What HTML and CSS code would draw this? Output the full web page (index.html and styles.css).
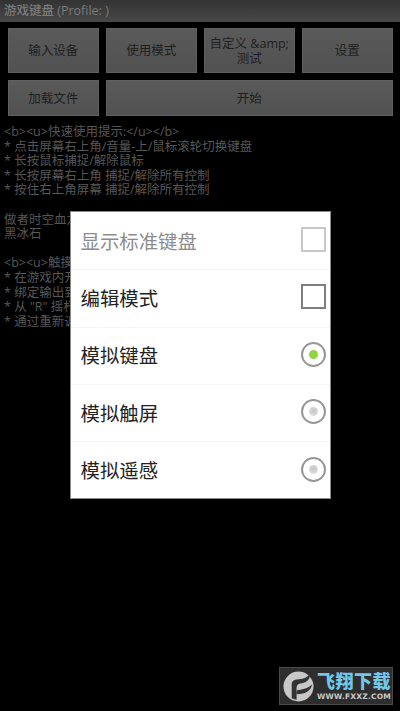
FILE: index.html
```html
<!DOCTYPE html>
<html>
  <head>
    <title>游戏键盘</title>
    <meta name="viewport" content="width=device-width, initial-scale=1">
    <link rel="stylesheet" href="styles.css">
  </head>
  <body>
    <div class="title-bar">游戏键盘 (Profile: )</div>
    <div class="buttons">
      <div class="btn btn-tall">输入设备</div>
      <div class="btn btn-tall">使用模式</div>
      <div class="btn btn-tall">自定义 &amp;amp;<br>测试</div>
      <div class="btn btn-tall">设置</div>
      <div class="btn btn-short">加载文件</div>
      <div class="btn btn-short btn-wide">开始</div>
    </div>
    <div class="help">
      <p>&lt;b&gt;&lt;u&gt;快速使用提示:&lt;/u&gt;&lt;/b&gt;</p>
      <p>* 点击屏幕右上角/音量-上/鼠标滚轮切换键盘</p>
      <p>* 长按鼠标捕捉/解除鼠标</p>
      <p>* 长按屏幕右上角 捕捉/解除所有控制</p>
      <p>* 按住右上角屏幕 捕捉/解除所有控制</p>
      <p>&nbsp;</p>
      <p>做者时空血龙</p>
      <p>黑冰石</p>
      <p>&nbsp;</p>
      <p>&lt;b&gt;&lt;u&gt;触摸屏</p>
      <p>* 在游戏内开启</p>
      <p>* 绑定输出到</p>
      <p>* 从 "R" 摇杆</p>
      <p>* 通过重新调整</p>
    </div>

    <div class="dialog">
      <div class="row row-disabled">
        <span>显示标准键盘</span>
        <span class="check check-disabled"></span>
      </div>
      <div class="row">
        <span>编辑模式</span>
        <span class="check"></span>
      </div>
      <div class="row">
        <span>模拟键盘</span>
        <span class="radio"><span class="dot dot-on"></span></span>
      </div>
      <div class="row">
        <span>模拟触屏</span>
        <span class="radio"><span class="dot"></span></span>
      </div>
      <div class="row">
        <span>模拟遥感</span>
        <span class="radio"><span class="dot"></span></span>
      </div>
    </div>

    <div class="watermark">
      <svg class="wm-logo" width="31" height="31" viewBox="0 0 32 32">
        <circle cx="16" cy="16" r="15.500" fill="#c8c8c8"/>
        <path d="M9 28 V14 C9 8 15 9 20 8 C24 7 26 5 28 3 C28 10 23 12 18 13 C15 13.500 14 15 14 18 V30 Z" fill="#333"/>
        <path d="M14 20 C19 19 25 19 30 14 C29 20 24 24 14 24 Z" fill="#333"/>
      </svg>
      <div class="wm-text">
        <div class="wm-name">飞翔下载</div>
        <div class="wm-url">WWW.FXXZ.COM</div>
      </div>
    </div>
  </body>
</html>
```

FILE: styles.css
```css
html, body {
  margin: 0;
  padding: 0;
}
body {
  position: relative;
  width: 400px;
  height: 711px;
  overflow: hidden;
  background-color: #000;
  font-family: "Open Sans", "Noto Sans CJK SC", sans-serif;
}
.title-bar {
  height: 22px;
  line-height: 22px;
  padding-left: 4px;
  font-size: 12.5px;
  font-weight: 500;
  color: #7b7b7b;
  background: linear-gradient(#333, #484848);
}
.buttons {
  display: grid;
  grid-template-columns: repeat(4, 90.5px);
  column-gap: 7.5px;
  row-gap: 7px;
  padding: 6px 8px 0 8px;
}
.btn {
  display: flex;
  align-items: center;
  justify-content: center;
  text-align: center;
  font-size: 12.5px;
  line-height: 15px;
  color: #1f1f1f;
  background: linear-gradient(#5a5a5a, #515151);
  box-sizing: border-box;
  border: 1px solid #5f5f5f;
}
.btn-tall {
  height: 45px;
}
.btn-short {
  height: 36px;
}
.btn-wide {
  grid-column: 2 / 5;
}
.help {
  padding: 9px 0 0 4px;
  font-size: 12.5px;
  line-height: 14.6px;
  color: #575757;
}
.help p {
  margin: 0;
}
.dialog {
  position: absolute;
  left: 70px;
  top: 211px;
  width: 261px;
  height: 288px;
  box-sizing: border-box;
  border: 1px solid #8a8a8a;
  padding-top: 1px;
  background-color: #fff;
}
.row {
  display: flex;
  align-items: center;
  justify-content: space-between;
  height: 57.3px;
  box-sizing: border-box;
  padding: 0 4px 2px 9.5px;
  border-bottom: 1px solid #f5f5f5;
  font-size: 19.4px;
  color: #222;
}
.row:last-child {
  border-bottom: none;
}
.row-disabled {
  color: #8c8c8c;
}
.check {
  width: 25px;
  height: 25px;
  margin-top: -1px;
  box-sizing: border-box;
  border: 2px solid #7e7e7e;
}
.check-disabled {
  border-color: #c8c8c8;
}
.radio {
  display: flex;
  align-items: center;
  justify-content: center;
  width: 25px;
  height: 25px;
  margin-top: -1px;
  box-sizing: border-box;
  border: 2px solid #979797;
  border-radius: 50%;
}
.dot {
  width: 9px;
  height: 9px;
  border-radius: 50%;
  background: radial-gradient(circle at 50% 40%, #c4c4c4, #e8e8e8);
}
.dot-on {
  background: #8ed63c;
}
.watermark {
  position: absolute;
  left: 279px;
  top: 667px;
  width: 114px;
  height: 38px;
  display: flex;
  align-items: center;
  gap: 3px;
  padding-left: 3px;
  box-sizing: border-box;
  border: 1px solid #4a4a4a;
  background-color: #2e2e2e;
}
.wm-text {
  display: flex;
  flex-direction: column;
  align-items: center;
}
.wm-name {
  font-size: 18px;
  line-height: 21px;
  font-weight: 900;
  letter-spacing: 0.5px;
  color: #72c8ea;
}
.wm-url {
  font-family: "DejaVu Sans", sans-serif;
  font-size: 7.5px;
  line-height: 10px;
  font-weight: 700;
  letter-spacing: 0.2px;
  color: #c8c8c8;
}
```
